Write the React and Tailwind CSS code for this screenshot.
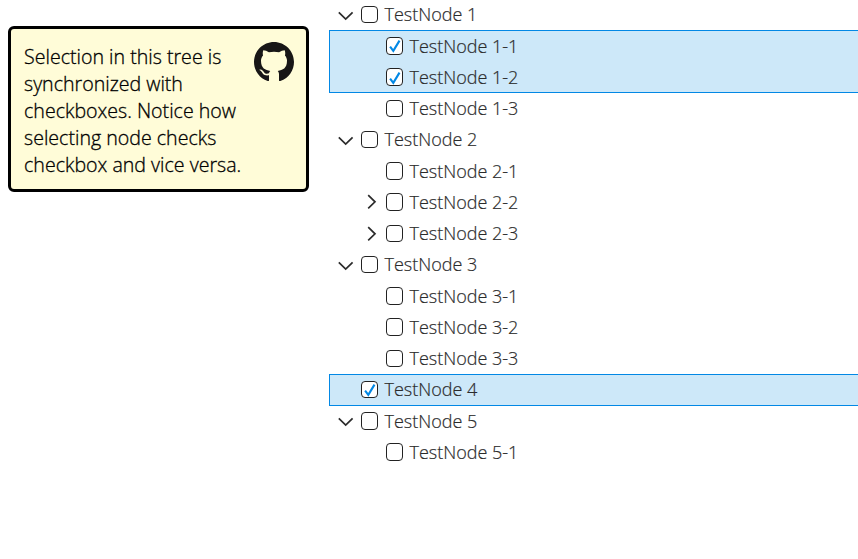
const rows = [
  { label: 'TestNode 1', level: 0, arrow: 'down' },
  { label: 'TestNode 1-1', level: 1, selected: 'first' },
  { label: 'TestNode 1-2', level: 1, selected: 'last' },
  { label: 'TestNode 1-3', level: 1 },
  { label: 'TestNode 2', level: 0, arrow: 'down' },
  { label: 'TestNode 2-1', level: 1 },
  { label: 'TestNode 2-2', level: 1, arrow: 'right' },
  { label: 'TestNode 2-3', level: 1, arrow: 'right' },
  { label: 'TestNode 3', level: 0, arrow: 'down' },
  { label: 'TestNode 3-1', level: 1 },
  { label: 'TestNode 3-2', level: 1 },
  { label: 'TestNode 3-3', level: 1 },
  { label: 'TestNode 4', level: 0, selected: 'only' },
  { label: 'TestNode 5', level: 0, arrow: 'down' },
  { label: 'TestNode 5-1', level: 1 },
];

const rowTones = {
  none: 'h-[31.25px] border-y border-l border-transparent',
  first: 'h-[31.25px] border-l border-t border-[#0288e5] bg-[#cde8f9] pb-px',
  last: 'h-[31.25px] border-b border-l border-[#0288e5] bg-[#cde8f9] pt-px',
  only: 'h-[32.25px] -mb-px border-y border-l border-[#0288e5] bg-[#cde8f9] pb-px',
};

function Arrow({ direction }) {
  return (
    <svg className="mt-px h-5 w-5 shrink-0" viewBox="0 0 20 20" fill="none" stroke="#2b2b2b" strokeWidth="1.7">
      {direction === 'down' && <path d="M2.8 7.3l6.9 6.8 6.9-6.8" />}
      {direction === 'right' && <path d="M7.2 3.2l6.8 6.6-6.8 6.6" />}
    </svg>
  );
}

function Checkbox({ checked }) {
  return (
    <span className="mt-[0.5px] flex h-[17.5px] w-[17px] shrink-0 items-center justify-center rounded-[4px] border border-[#222] bg-white">
      {checked && (
        <svg className="h-[15px] w-[15px]" viewBox="0 0 15 15" fill="none" stroke="#0288e5" strokeWidth="2.1">
          <path d="M3.1 8.7l3.2 4.2L12.5 2.6" />
        </svg>
      )}
    </span>
  );
}

function TreeRow({ row }) {
  return (
    <div className={`flex items-center ${row.level ? 'pl-[31px]' : 'pl-[6px]'} ${rowTones[row.selected || 'none']}`}>
      <Arrow direction={row.arrow} />
      <span className="ml-[5px] flex items-center">
        <Checkbox checked={Boolean(row.selected)} />
      </span>
      <span className="ml-[6.5px] whitespace-nowrap text-[18px] font-light leading-[28px] text-[#2b2b2b] [-webkit-text-stroke:0.2px_#2b2b2b]">{row.label}</span>
    </div>
  );
}

export default function App() {
  return (
    <div className="flex h-[559px] w-full overflow-hidden bg-white font-['Open_Sans',sans-serif]">
      <aside className="ml-2 mt-[26px] flex h-[166px] w-[301px] shrink-0 justify-between rounded-md border-[3px] border-black bg-[#fffcd8] pl-[13px] pr-3 pt-[13px]">
        <p className="whitespace-nowrap pt-px text-[19.6px] font-light leading-[27px] text-black [-webkit-text-stroke:0.3px_#000]">
          <span className="block">Selection in this tree is</span>
          <span className="block">synchronized with</span>
          <span className="block">checkboxes. Notice how</span>
          <span className="block">selecting node checks</span>
          <span className="block">checkbox and vice versa.</span>
        </p>
        <svg className="h-10 w-10 shrink-0" viewBox="0 0 16 16" fill="#181616">
          <path d="M8 0C3.58 0 0 3.58 0 8c0 3.54 2.29 6.53 5.47 7.59.3.05.53 0 .53-.2V13.3c-.6.1-1.9.2-2.5-.7-.35-.6-.6-1-1-1.2-.28-.15-.5-.45 0-.45.8 0 1.15.6 1.5 1.1.5.8 1.4.7 2 .45.05-.4.2-.7.5-.95-2-.25-3.7-1.05-3.7-4.05 0-.87.31-1.59.82-2.15-.15-.5-.2-1.3.1-2.05.7 0 1.5.3 2.25.82a8.2 8.2 0 0 1 4.06 0c.75-.52 1.55-.82 2.25-.82.3.75.25 1.55.1 2.05.51.56.82 1.27.82 2.15 0 3-1.7 3.8-3.7 4.05.35.3.5.8.5 1.48v2.4c0 .2.2.26.55.18A8.01 8.01 0 0 0 16 8c0-4.42-3.58-8-8-8z" />
        </svg>
      </aside>
      <main className="-mt-[1.25px] ml-5 min-w-0 flex-1">
        {rows.map((row) => <TreeRow key={row.label} row={row} />)}
      </main>
    </div>
  );
}
